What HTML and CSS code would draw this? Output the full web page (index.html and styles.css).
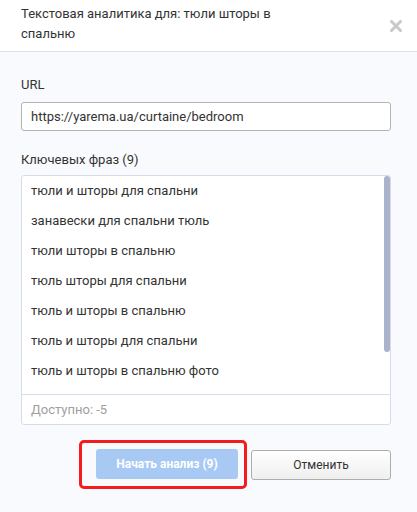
FILE: index.html
```html
<!DOCTYPE html>
<html lang="ru">
<head>
    <meta charset="UTF-8">
    <meta name="viewport" content="width=device-width, initial-scale=1.0">
    <title>Текстовая аналитика</title>
    <link rel="stylesheet" href="styles.css">
</head>
<body>
    <div class="modal">
        <div class="modal-header">
            <div class="modal-title">Текстовая аналитика для: тюли шторы в спальню</div>
            <svg class="close" width="12" height="12" viewBox="0 0 12 12">
                <path d="M1.5 1.5 L10.5 10.5 M10.5 1.5 L1.5 10.5" stroke="#c9c9c9" stroke-width="3" stroke-linecap="square"/>
            </svg>
        </div>
        <div class="modal-body">
            <div class="field-label">URL</div>
            <input class="url-input" type="text" value="https://yarema.ua/curtaine/bedroom">
            <div class="field-label keys-label">Ключевых фраз (9)</div>
            <div class="keys-box">
                <ul class="keys-list">
                    <li>тюли и шторы для спальни</li>
                    <li>занавески для спальни тюль</li>
                    <li>тюли шторы в спальню</li>
                    <li>тюль шторы для спальни</li>
                    <li>тюль и шторы в спальню</li>
                    <li>тюль и шторы для спальни</li>
                    <li>тюль и шторы в спальню фото</li>
                </ul>
                <span class="scroll-thumb"></span>
                <div class="keys-footer">Доступно: -5</div>
            </div>
            <div class="actions">
                <span class="highlight">
                    <button class="btn btn-primary">Начать анализ (9)</button>
                </span>
                <button class="btn btn-cancel">Отменить</button>
            </div>
        </div>
    </div>
</body>
</html>
```

FILE: styles.css
```css
*{
    padding: 0;
    margin: 0;
    box-sizing: border-box;
}
body{
    background-color: #f9fafd;
    font-family: Roboto, "Liberation Sans", sans-serif;
    font-size: 13px;
    color: #333;
}
.modal-header{
    position: relative;
    background-color: #fff;
    border-bottom: 1px solid #dfe4ec;
    height: 52px;
    padding: 4px 21px 0;
}
.modal-title{
    width: 290px;
    line-height: 20px;
    font-size: 13px;
    color: #333;
}
.close{
    position: absolute;
    right: 15px;
    top: 20px;
    cursor: pointer;
}
.modal-body{
    padding: 23px 26px 0 21px;
}
.field-label{
    line-height: 20px;
    font-size: 13px;
    color: #333;
}
.url-input{
    display: block;
    width: 100%;
    height: 29px;
    margin-top: 7px;
    padding: 0 9px;
    border: 1px solid #b3b3b3;
    border-radius: 3px;
    font-family: inherit;
    font-size: 13px;
    color: #333;
    background-color: #fff;
    outline: none;
}
.keys-label{
    margin-top: 19px;
}
.keys-box{
    position: relative;
    margin-top: 5px;
    background-color: #fff;
    border: 1px solid #d6dcea;
    border-radius: 3px;
}
.keys-list{
    list-style: none;
    height: 219px;
    overflow: hidden;
    border-bottom: 1px solid #d6dcea;
}
.scroll-thumb{
    position: absolute;
    top: 0;
    right: 0;
    width: 6px;
    height: 176px;
    background-color: #a9b4cb;
    border-radius: 3px;
}
.keys-list > li{
    height: 30px;
    line-height: 30px;
    padding-left: 9px;
    font-size: 13px;
}
.keys-footer{
    height: 29px;
    line-height: 29px;
    padding-left: 9px;
    color: #a0a0a0;
}
.actions{
    display: flex;
    justify-content: flex-end;
    align-items: center;
    gap: 4px;
    margin-top: 15px;
}
.highlight{
    display: inline-flex;
    border: 3px solid #f41c1c;
    border-radius: 5px;
    padding: 6px 6px 7px 14px;
}
.btn{
    height: 30px;
    border-radius: 3px;
    font-family: inherit;
    font-size: 12px;
    cursor: pointer;
}
.btn-primary{
    width: 142px;
    border: none;
    background-color: #a7c9f3;
    color: #fff;
    font-weight: bold;
}
.btn-cancel{
    width: 140px;
    border: 1px solid #adadad;
    background: linear-gradient(#fff, #efefef);
    color: #333;
}
```
